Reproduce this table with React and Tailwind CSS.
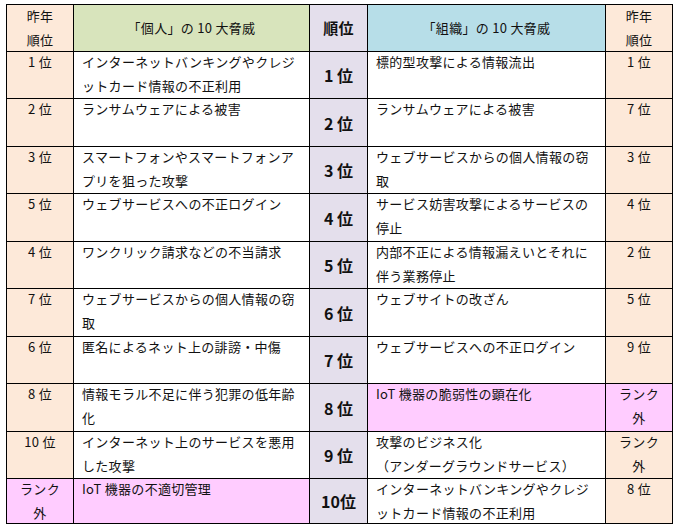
import React from "react";

const rows = [
  { l: "1 位", lt: ["インターネットバンキングやクレジ", "ットカード情報の不正利用"], n: "1 位", rt: ["標的型攻撃による情報流出"], r: ["1 位"] },
  { l: "2 位", lt: ["ランサムウェアによる被害"], n: "2 位", rt: ["ランサムウェアによる被害"], r: ["7 位"] },
  { l: "3 位", lt: ["スマートフォンやスマートフォンア", "プリを狙った攻撃"], n: "3 位", rt: ["ウェブサービスからの個人情報の窃", "取"], r: ["3 位"] },
  { l: "5 位", lt: ["ウェブサービスへの不正ログイン"], n: "4 位", rt: ["サービス妨害攻撃によるサービスの", "停止"], r: ["4 位"] },
  { l: "4 位", lt: ["ワンクリック請求などの不当請求"], n: "5 位", rt: ["内部不正による情報漏えいとそれに", "伴う業務停止"], r: ["2 位"] },
  { l: "7 位", lt: ["ウェブサービスからの個人情報の窃", "取"], n: "6 位", rt: ["ウェブサイトの改ざん"], r: ["5 位"] },
  { l: "6 位", lt: ["匿名によるネット上の誹謗・中傷"], n: "7 位", rt: ["ウェブサービスへの不正ログイン"], r: ["9 位"] },
  { l: "8 位", lt: ["情報モラル不足に伴う犯罪の低年齢", "化"], n: "8 位", rt: ["IoT 機器の脆弱性の顕在化"], r: ["ランク", "外"], rp: true },
  { l: "10 位", lt: ["インターネット上のサービスを悪用", "した攻撃"], n: "9 位", rt: ["攻撃のビジネス化", "（アンダーグラウンドサービス）"], r: ["ランク", "外"] },
  { l: ["ランク", "外"], lt: ["IoT 機器の不適切管理"], n: "10位", rt: ["インターネットバンキングやクレジ", "ットカード情報の不正利用"], r: ["8 位"], lp: true },
];

function Lines({ lines, center }) {
  const arr = Array.isArray(lines) ? lines : [lines];
  return (
    <div className={`-mt-[2px] leading-[24px] whitespace-nowrap ${center ? "text-center" : ""}`}>
      {arr.map((t, i) => (
        <div key={i}>{t}</div>
      ))}
    </div>
  );
}

export default function App() {
  const cell = "border-r border-b border-black overflow-hidden";
  return (
    <div className="w-[678px] h-[530px] bg-white pt-[4px] pl-[6px]" style={{ fontFamily: '"Noto Sans CJK JP", "Noto Sans", sans-serif' }}>
      <div className="grid grid-cols-[67px_236px_58px_238px_67px] grid-rows-[47px_47px_48px_47px_48px_47px_48px_47px_48px_47px_45px] w-[667px] border-l border-t border-black text-[13px] tracking-[0.3px] text-[#111]">
        <div className={`${cell} bg-[#fde9d9] flex items-center justify-center`}>
          <div className="leading-[24px] text-center"><div>昨年</div><div>順位</div></div>
        </div>
        <div className={`${cell} bg-[#d8e4bc] flex items-center justify-center`}>「個人」の 10 大脅威</div>
        <div className={`${cell} bg-[#e4dfec] flex items-center justify-center font-bold text-[15px]`}>順位</div>
        <div className={`${cell} bg-[#b7dee8] flex items-center justify-center`}>「組織」の 10 大脅威</div>
        <div className={`${cell} bg-[#fde9d9] flex items-center justify-center`}>
          <div className="leading-[24px] text-center"><div>昨年</div><div>順位</div></div>
        </div>
        {rows.map((r, i) => (
          <React.Fragment key={i}>
            <div className={`${cell} ${r.lp ? "bg-[#ffccff]" : "bg-[#fde9d9]"}`}>
              <Lines lines={r.l} center />
            </div>
            <div className={`${cell} ${r.lp ? "bg-[#ffccff]" : "bg-white"} pl-[8px]`}>
              <Lines lines={r.lt} />
            </div>
            <div className={`${cell} bg-[#e4dfec] flex items-center justify-center font-bold text-[16px] tracking-normal`}>
              {r.n}
            </div>
            <div className={`${cell} ${r.rp ? "bg-[#ffccff]" : "bg-white"} pl-[8px]`}>
              <Lines lines={r.rt} />
            </div>
            <div className={`${cell} ${r.rp ? "bg-[#ffccff]" : "bg-[#fde9d9]"}`}>
              <Lines lines={r.r} center />
            </div>
          </React.Fragment>
        ))}
      </div>
    </div>
  );
}
